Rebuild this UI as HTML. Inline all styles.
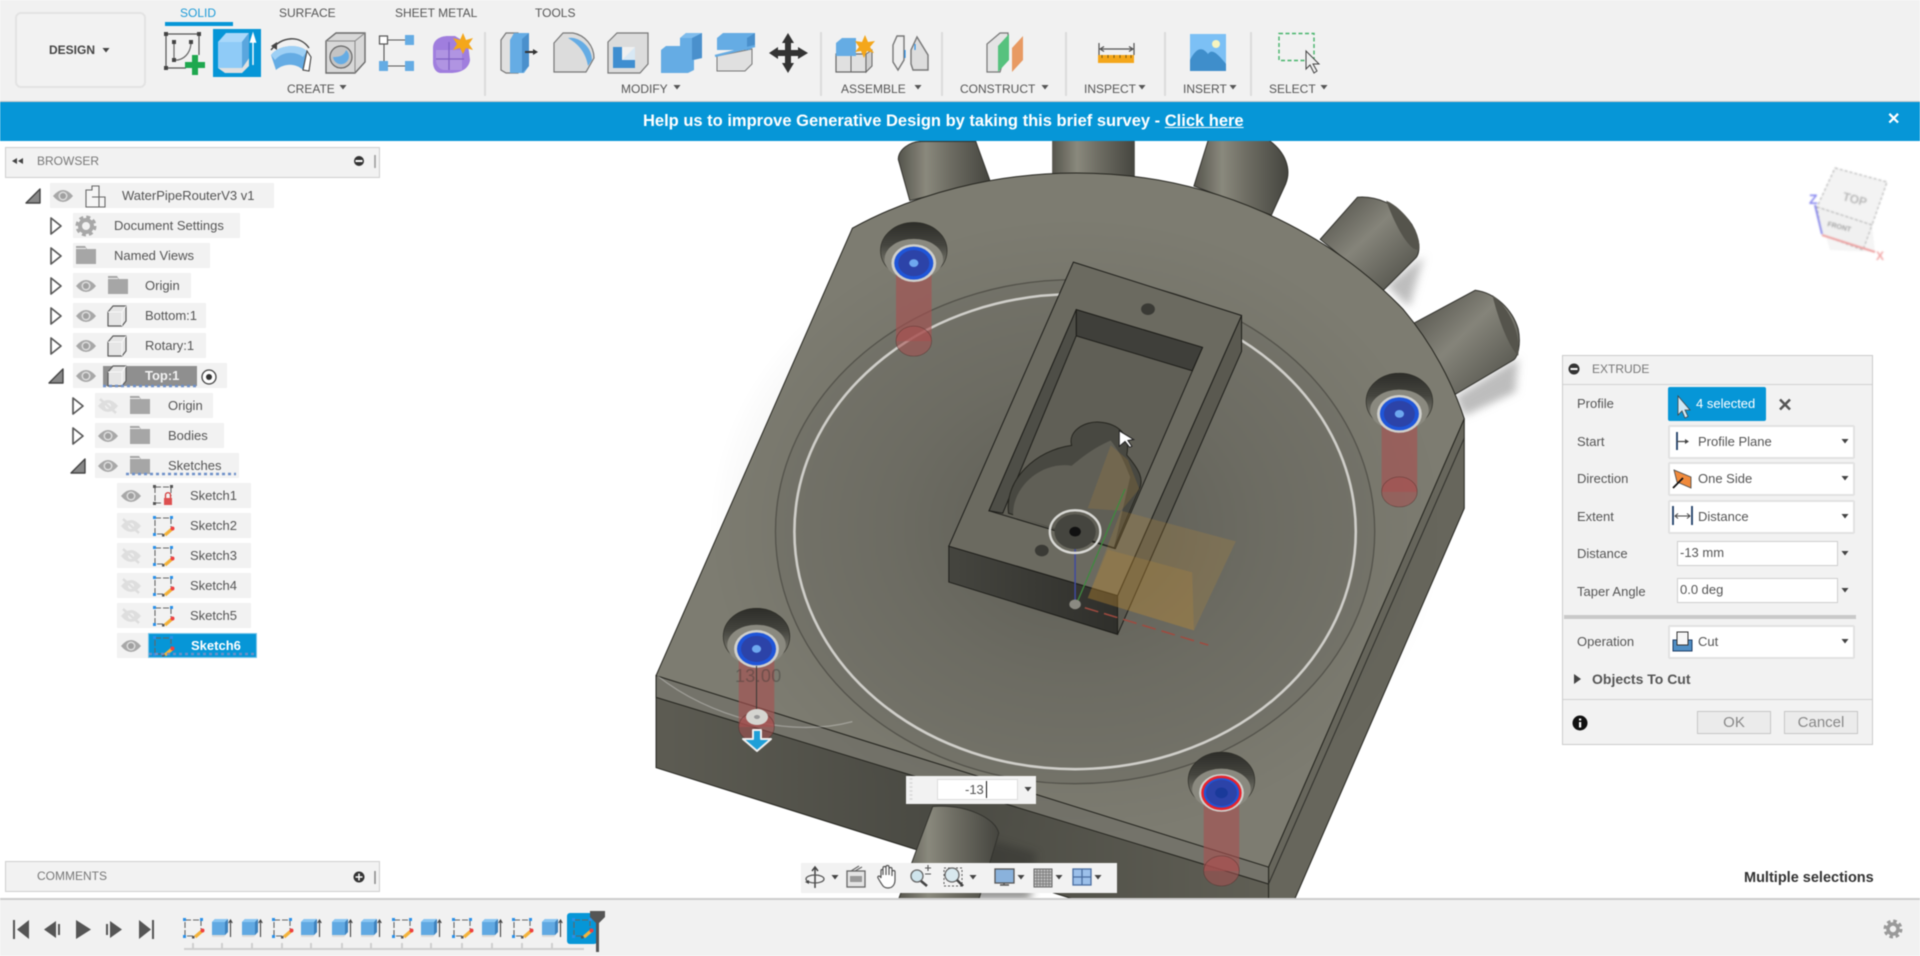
<!DOCTYPE html>
<html lang="en"><head><meta charset="utf-8"><title>Fusion 360 Extrude</title>
<style>
html,body{margin:0;padding:0;background:#fff}
#root{position:relative;width:1920px;height:956px;overflow:hidden;background:#fff;font-family:"Liberation Sans",sans-serif;color:#555;filter:blur(.42px)}
.a{position:absolute;box-sizing:border-box}
.t{position:absolute;white-space:nowrap;line-height:16px;height:16px}
.s{font-size:12px;color:#555}
.m{font-size:13px;color:#555}
.r{position:absolute;height:25px;background:#f2f2f2}
.sel{position:absolute;left:1668px;width:187px;height:34px;background:#fff;border:2px solid #e2e2e2;border-radius:2px;box-sizing:border-box}
.inp{position:absolute;left:1677px;width:161px;height:25px;background:#fff;border:1px solid #cfcfcf;box-sizing:border-box}
svg{position:absolute;left:0;top:0}
.ns *{vector-effect:non-scaling-stroke}
</style></head><body><div id="root">

<svg width="1920" height="956" viewBox="0 0 1920 956">
<defs>
<clipPath id="vp"><rect x="0" y="141" width="1920" height="757"/></clipPath>
<linearGradient id="cy" x1="0" x2="1" y1="0" y2="0"><stop offset="0" stop-color="#55544c"/><stop offset=".3" stop-color="#8a897d"/><stop offset=".55" stop-color="#6f6e64"/><stop offset="1" stop-color="#45453f"/></linearGradient>
<linearGradient id="cy2" x1="0" x2="1" y1="0" y2="1"><stop offset="0" stop-color="#4c4b44"/><stop offset=".45" stop-color="#85847a"/><stop offset="1" stop-color="#4a4a43"/></linearGradient>
<linearGradient id="cy3" x1="1" x2="0" y1="0" y2="1"><stop offset="0" stop-color="#4c4b44"/><stop offset=".5" stop-color="#8f8e82"/><stop offset="1" stop-color="#55544c"/></linearGradient>
<radialGradient id="shade" cx=".5" cy=".5" r=".5"><stop offset="0" stop-color="#3a3a34" stop-opacity=".42"/><stop offset=".5" stop-color="#3a3a34" stop-opacity=".17"/><stop offset="1" stop-color="#3a3a34" stop-opacity="0"/></radialGradient>
<linearGradient id="fr" x1="0" x2="1" y1="0" y2="0"><stop offset="0" stop-color="#5d5c53"/><stop offset=".45" stop-color="#4a4a43"/><stop offset="1" stop-color="#605f55"/></linearGradient>
<linearGradient id="bf" x1="0" x2="1" y1="0" y2="0"><stop offset="0" stop-color="#45453f"/><stop offset="1" stop-color="#2f2f2b"/></linearGradient>
<linearGradient id="cs" x1="0" x2="0" y1="0" y2="1"><stop offset="0" stop-color="#2d2d29"/><stop offset=".4" stop-color="#45453f"/><stop offset=".75" stop-color="#77766c"/></linearGradient>
<filter id="b8" x="-50%" y="-50%" width="200%" height="200%"><feGaussianBlur stdDeviation="8"/></filter>
<filter id="b1"><feGaussianBlur stdDeviation=".8"/></filter>
<g id="hole">
<circle cx="0" cy="-26" r="58" fill="url(#cs)" stroke="#25251f" stroke-width="1"/>
<ellipse cx="0" cy="-8" rx="51" ry="42" fill="#8a897f"/>
<rect x="-31" y="0" width="62" height="161" fill="#a85050" fill-opacity=".62"/>
<circle cx="0" cy="161" r="31" fill="#a85050" fill-opacity=".55" stroke="#4e2c2a" stroke-opacity=".7" stroke-width="1"/>
<circle r="39" fill="#d0d0cc"/><circle r="34" fill="#1f55d8"/><circle r="27" fill="#2c43a8"/><circle r="8" fill="#6ea8ef"/>
</g>
<g id="eye"><path d="M-10 0Q0-12 10 0Q0 12-10 0Z" fill="#a8a8a8"/><circle r="4.5" fill="#dcdcdc"/><circle r="3" fill="#a0a0a0"/></g>
<g id="eyeoff"><path d="M-10 0Q0-12 10 0Q0 12-10 0Z" fill="#dedede"/><circle r="3" fill="#f2f2f2"/><path d="M-8-7L8 7" stroke="#dedede" stroke-width="2.5"/></g>
<g id="fold"><path d="M-10-10h9l2 3h9v15h-20z" fill="#a6a6a6"/><path d="M-10-7.500h10" stroke="#eee" stroke-width="1"/></g>
<g id="cube"><path d="M-9-4L-4-10H9V5L5 10H-9Z" fill="#e6e6e6" stroke="#5a5a5a" stroke-width="1.200" stroke-linejoin="round"/><path d="M-9-4H5V10M5-4L9-10" fill="none" stroke="#f8f8f8" stroke-width="1"/></g>
<g id="tri"><path d="M-5-8L5 0L-5 8Z" fill="#fff" stroke="#5a5a5a" stroke-width="1.700" stroke-linejoin="round"/></g>
<g id="trid"><path d="M-7 7L7-7V7Z" fill="#888" stroke="#444" stroke-width="1.400" stroke-linejoin="round"/></g>
<g id="sk"><path d="M-8-8H8V1M-8-6V8H0" fill="none" stroke="#666" stroke-width="1.100" stroke-dasharray="6 2"/><g fill="#2a90e8"><rect x="-10" y="-10" width="3" height="3"/><rect x="7" y="-10" width="3" height="3"/><rect x="-10" y="7" width="3" height="3"/></g><path d="M9 3L2 9" stroke="#f3b23a" stroke-width="3.400"/><circle cx="9.500" cy="2.500" r="2" fill="#ee4040"/><rect x="-1" y="8" width="2.500" height="2.500" fill="#555"/></g>
<g id="tx"><path d="M-10-4L-7-8H3L5-10V5L2 9H-10Z" fill="#dcdcdc"/><path d="M-10-6L-7-9H6V4L3 7H-10Z" fill="#61a9e2"/><path d="M3-7L6-9V4L3 7Z" fill="#3f83be"/><path d="M-10-6L-7-9H6L3-6Z" fill="#8ac6f2"/><path d="M8.500 9V-7M6.700-5L8.500-8L10.300-5" stroke="#444" stroke-width="1.100" fill="none"/></g>
<g id="car"><path d="M-3.500-2H3.500L0 2.500Z" fill="#444"/></g>
<g id="caru"><path d="M-3.500-2H3.500L0 2.500Z" fill="#555"/></g>
</defs>

<!-- MODEL -->
<g clip-path="url(#vp)">
<g class="ns" transform="translate(640,140) scale(.574,.4847)">
<path d="M1300 300L1365 240L1340 345Z" fill="#bdbdbd" filter="url(#b8)"/>
<path d="M1420 530L1530 450L1525 520L1435 570Z" fill="#bdbdbd" filter="url(#b8)"/>
<path d="M450 40C450 20 470 3 490 3L585 3L610 85L470 125Z" fill="url(#cy)" stroke="#33332e"/>
<rect x="718" y="0" width="144" height="80" fill="url(#cy)"/>
<path d="M990 0L1095 0C1125 25 1135 60 1125 90L1100 155L965 95Z" fill="url(#cy)" stroke="#33332e"/>
<path d="M1250 118C1280 115 1320 130 1345 175C1360 205 1360 235 1350 245L1295 310L1185 205Z" fill="url(#cy2)" stroke="#33332e"/>
<path d="M1300 125C1330 140 1360 190 1358 225C1345 235 1320 190 1300 125Z" fill="#55544c"/>
<path d="M1455 310C1490 315 1520 350 1530 390C1535 420 1530 450 1520 455L1420 525L1345 380Z" fill="url(#cy2)" stroke="#33332e"/>
<path d="M1485 320C1510 340 1535 395 1530 445C1515 430 1495 370 1485 320Z" fill="#55544c"/>
<!-- sides -->
<path d="M1436 575L1436 760L1140 1568L1095 1568L1095 1500Z" fill="#67665c" stroke="#25251f"/>
<path d="M28 1105L1095 1500L1095 1568L760 1568L28 1295Z" fill="url(#fr)" stroke="#25251f"/>
<path d="M28 1105L1095 1500L1095 1535L28 1150Z" fill="#74736a" stroke="#25251f"/>
<path d="M1436 615L1095 1535" stroke="#2f2f2a" fill="none"/>
<path d="M600 1440L690 1470L680 1568L560 1568Z" fill="#33332e" opacity=".5" filter="url(#b8)"/>
<!-- bottom cylinder -->
<path d="M480 1470L510 1375C570 1370 620 1400 625 1430L590 1568L450 1568Z" fill="url(#cy)" stroke="#33332e"/>
<!-- top face -->
<path d="M370 182C480 110 620 68 760 68C1000 68 1200 190 1330 350C1380 420 1415 500 1436 575L1095 1500L28 1105Z" fill="#7d7c71" stroke="#25251f"/>
<ellipse cx="758" cy="808" rx="522" ry="520" fill="#77766c" stroke="#55544c" stroke-width="1.300"/>
<ellipse cx="760" cy="800" rx="640" ry="640" fill="url(#shade)"/>
<ellipse cx="758" cy="808" rx="489" ry="490" fill="none" stroke="#cfcec9" stroke-width="2.600"/>
<path d="M30 1105C120 1190 260 1235 370 1200" fill="none" stroke="#fff" stroke-opacity=".3" stroke-width="1.300"/>
<!-- box -->
<path d="M538 838L832 940L832 1020L538 912Z" fill="url(#bf)" stroke="#1e1e1a"/>
<path d="M1048 362L1048 436L832 1020L832 940Z" fill="#5a5950" stroke="#1e1e1a"/>
<path d="M755 252L1048 362L832 940L538 838Z" fill="#6b6a60" stroke="#1e1e1a"/>
<path d="M760 350L980 428L828 843L608 765Z" fill="#605f56" stroke="#1e1e1a"/>
<path d="M760 350L980 428L962 476L760 404Z" fill="#3f3f3a" stroke="#1e1e1a"/>
<path d="M760 350L760 404L632 770L608 765Z" fill="#4e4e47" stroke="#1e1e1a"/>
<path d="M642 770C635 700 690 640 752 630C745 600 775 580 800 582C835 585 855 610 848 650C870 680 878 700 870 720L826 842Z" fill="#484841" stroke="#25251f"/>
<path d="M650 775C648 715 700 662 752 672C770 655 790 635 820 620C840 650 845 670 854 695L826 840Z" fill="#605f56"/>
<circle cx="885" cy="349" r="12" fill="#3a3a35"/><circle cx="700" cy="847" r="12" fill="#3a3a35"/>
<!-- planes -->
<path d="M820 630L850 660L870 720L838 765L780 760Z" fill="#c89030" fill-opacity=".18"/>
<path d="M838 765L1038 828L965 1012L780 945Z" fill="#c89030" fill-opacity=".2"/>
<path d="M815 845L962 892L965 1012L780 945Z" fill="#c89030" fill-opacity=".2"/>
<!-- axes -->
<path d="M758 830V958" stroke="#3f4aa0" stroke-width="1.500"/>
<path d="M760 958L845 720" stroke="#3f8a3f" stroke-width="1.300"/>
<path d="M775 965L990 1042" stroke="#a04a3f" stroke-width="1.500" stroke-dasharray="14 6"/>
<circle cx="758" cy="958" r="10" fill="#8b8a82"/>
<circle cx="758" cy="808" r="36" fill="#45453f"/><circle cx="758" cy="808" r="10" fill="#111"/>
<circle cx="758" cy="808" r="44" fill="none" stroke="#d8d8d4" stroke-width="2.400"/>
<!-- holes -->
<use href="#hole" transform="translate(477,254)"/>
<use href="#hole" transform="translate(1323,565)"/>
<use href="#hole" transform="translate(203,1050)"/>
<use href="#hole" transform="translate(1013,1347)"/>
<circle cx="1013" cy="1347" r="33" fill="none" stroke="#e8222c" stroke-width="2.500"/>
<circle cx="1013" cy="1347" r="11" fill="#1a3a9a"/>
<path d="M203 1085V1190" stroke="#3a3a35" stroke-width="1"/>
<path d="M835 600V632L845 622L853 634L857 632L850 620L860 618Z" fill="#fff" stroke="#222" stroke-width="1"/>
</g>
<ellipse cx="757" cy="717" rx="11" ry="8" fill="#d5d5d0"/><ellipse cx="757" cy="717" rx="3" ry="2" fill="#999"/>
<path d="M753 730H761V739H771L757 751L743 739H753Z" fill="#1f9fd8" stroke="#eee" stroke-width="2" stroke-linejoin="round"/>
</g>
</svg>
<div class="t" style="left:735px;top:666px;font-size:18px;line-height:20px;height:20px;color:rgba(50,50,48,.38);letter-spacing:.3px">13.00</div>

<!-- TOOLBAR -->
<div class="a" style="left:0;top:0;width:1920px;height:102px;background:#f1f1f1;border-bottom:1px solid #c8c8c8"></div>
<div class="a" style="left:15px;top:12px;width:131px;height:76px;border:2px solid #e3e3e3;border-radius:6px;background:#f2f2f2"></div>
<div class="t" style="left:49px;top:42px;font-size:12px;font-weight:bold;color:#444">DESIGN</div>
<div class="t s" style="left:180px;top:5px;color:#1d9bd8">SOLID</div>
<div class="a" style="left:165px;top:22px;width:68px;height:4px;background:#0696d7"></div>
<div class="t s" style="left:279px;top:5px">SURFACE</div>
<div class="t s" style="left:395px;top:5px">SHEET METAL</div>
<div class="t s" style="left:535px;top:5px">TOOLS</div>
<div class="t s" style="left:287px;top:81px">CREATE</div>
<div class="t s" style="left:621px;top:81px">MODIFY</div>
<div class="t s" style="left:841px;top:81px">ASSEMBLE</div>
<div class="t s" style="left:960px;top:81px">CONSTRUCT</div>
<div class="t s" style="left:1084px;top:81px">INSPECT</div>
<div class="t s" style="left:1183px;top:81px">INSERT</div>
<div class="t s" style="left:1269px;top:81px">SELECT</div>

<!-- BANNER -->
<div class="a" style="left:0;top:102px;width:1920px;height:39px;background:#0696d7"></div>
<div class="t" style="left:643px;top:113px;font-size:16.500px;font-weight:bold;color:#fff">Help us to improve Generative Design by taking this brief survey - <span style="text-decoration:underline">Click here</span></div>
<div class="t" style="left:1887px;top:112px;font-size:16px;font-weight:bold;color:#fff">✕</div>

<!-- BROWSER -->
<div class="a" style="left:5px;top:147px;width:375px;height:31px;background:#f2f2f2;border:1px solid #cfcfcf"></div>
<div class="t s" style="left:37px;top:153px;color:#777">BROWSER</div>
<div class="r" style="left:50px;top:183px;width:224px"></div>
<div class="r" style="left:73px;top:213px;width:167px"></div>
<div class="r" style="left:73px;top:243px;width:137px"></div>
<div class="r" style="left:73px;top:273px;width:118px"></div>
<div class="r" style="left:73px;top:303px;width:133px"></div>
<div class="r" style="left:73px;top:333px;width:133px"></div>
<div class="r" style="left:73px;top:363px;width:154px"></div>
<div class="a" style="left:103px;top:366px;width:94px;height:20px;background:#8f8f8f"></div>
<div class="r" style="left:95px;top:393px;width:118px"></div>
<div class="r" style="left:95px;top:423px;width:129px"></div>
<div class="r" style="left:95px;top:453px;width:144px"></div>
<div class="r" style="left:117px;top:483px;width:134px"></div>
<div class="r" style="left:117px;top:513px;width:134px"></div>
<div class="r" style="left:117px;top:543px;width:134px"></div>
<div class="r" style="left:117px;top:573px;width:134px"></div>
<div class="r" style="left:117px;top:603px;width:134px"></div>
<div class="r" style="left:117px;top:633px;width:32px"></div>
<div class="a" style="left:148px;top:633px;width:109px;height:25px;background:#0696d7;border:1px solid #7cc6ea"></div>
<div class="t m" style="left:122px;top:188px">WaterPipeRouterV3 v1</div>
<div class="t m" style="left:114px;top:218px">Document Settings</div>
<div class="t m" style="left:114px;top:248px">Named Views</div>
<div class="t m" style="left:145px;top:278px">Origin</div>
<div class="t m" style="left:145px;top:308px">Bottom:1</div>
<div class="t m" style="left:145px;top:338px">Rotary:1</div>
<div class="t m" style="left:145px;top:368px;color:#f2f2f2;font-weight:bold">Top:1</div>
<div class="t m" style="left:168px;top:398px">Origin</div>
<div class="t m" style="left:168px;top:428px">Bodies</div>
<div class="t m" style="left:168px;top:458px">Sketches</div>
<div class="t m" style="left:190px;top:488px">Sketch1</div>
<div class="t m" style="left:190px;top:518px">Sketch2</div>
<div class="t m" style="left:190px;top:548px">Sketch3</div>
<div class="t m" style="left:190px;top:578px">Sketch4</div>
<div class="t m" style="left:190px;top:608px">Sketch5</div>
<div class="t m" style="left:191px;top:638px;color:#fff;font-weight:bold">Sketch6</div>

<!-- COMMENTS -->
<div class="a" style="left:5px;top:861px;width:375px;height:31px;background:#f2f2f2;border:1px solid #cfcfcf"></div>
<div class="t s" style="left:37px;top:868px;color:#777">COMMENTS</div>

<!-- TIMELINE -->
<div class="a" style="left:0;top:898px;width:1920px;height:58px;background:#f1f1f1;border-top:2px solid #cdcdcd"></div>
<div class="a" style="left:567px;top:913px;width:30px;height:31px;background:#0696d7;border-radius:3px"></div>

<!-- NAV -->
<div class="a" style="left:906px;top:776px;width:130px;height:28px;background:#f2f2f2"></div>
<div class="a" style="left:937px;top:779px;width:81px;height:21px;background:#fff;border:1px solid #ddd"></div>
<div class="t" style="left:965px;top:782px;font-size:13px;color:#555">-13</div>
<div class="a" style="left:986px;top:781px;width:1px;height:17px;background:#111"></div>
<div class="a" style="left:801px;top:863px;width:316px;height:30px;background:#f2f2f2"></div>
<div class="t" style="left:1744px;top:870px;font-size:14.500px;font-weight:bold;color:#333">Multiple selections</div>

<!-- EXTRUDE PANEL -->
<div class="a" style="left:1562px;top:355px;width:311px;height:390px;background:#f2f2f2;border:1px solid #cbcbcb"></div>
<div class="a" style="left:1563px;top:384px;width:309px;height:1px;background:#d2d2d2"></div>
<div class="t s" style="left:1592px;top:361px;color:#777">EXTRUDE</div>
<div class="t m" style="left:1577px;top:396px">Profile</div>
<div class="a" style="left:1668px;top:387px;width:98px;height:34px;background:#0696d7;border-radius:2px"></div>
<div class="t m" style="left:1696px;top:396px;color:#fff">4 selected</div>
<div class="t m" style="left:1577px;top:434px">Start</div>
<div class="sel" style="top:425px"></div><div class="t m" style="left:1698px;top:434px">Profile Plane</div>
<div class="t m" style="left:1577px;top:471px">Direction</div>
<div class="sel" style="top:462px"></div><div class="t m" style="left:1698px;top:471px">One Side</div>
<div class="t m" style="left:1577px;top:509px">Extent</div>
<div class="sel" style="top:500px"></div><div class="t m" style="left:1698px;top:509px">Distance</div>
<div class="t m" style="left:1577px;top:546px">Distance</div>
<div class="inp" style="top:541px"></div><div class="t m" style="left:1680px;top:545px">-13 mm</div>
<div class="t m" style="left:1577px;top:584px">Taper Angle</div>
<div class="inp" style="top:578px"></div><div class="t m" style="left:1680px;top:582px">0.0 deg</div>
<div class="a" style="left:1564px;top:615px;width:292px;height:4px;background:#c9c9c9"></div>
<div class="t m" style="left:1577px;top:634px">Operation</div>
<div class="sel" style="top:625px"></div><div class="t m" style="left:1698px;top:634px">Cut</div>
<div class="t" style="left:1592px;top:671px;font-size:14px;font-weight:bold;color:#555">Objects To Cut</div>
<div class="a" style="left:1563px;top:699px;width:309px;height:1px;background:#d2d2d2"></div>
<div class="a" style="left:1697px;top:711px;width:74px;height:23px;background:#ebebeb;border:1px solid #c6c6c6;text-align:center;font-size:15px;line-height:21px;color:#888">OK</div>
<div class="a" style="left:1784px;top:711px;width:74px;height:23px;background:#ebebeb;border:1px solid #c6c6c6;text-align:center;font-size:15px;line-height:21px;color:#888">Cancel</div>

<!-- ICON OVERLAY -->
<svg width="1920" height="956" viewBox="0 0 1920 956">
<!-- Toolbar carets -->
<use href="#car" transform="translate(106,50)"/><use href="#caru" transform="translate(343,87)"/><use href="#caru" transform="translate(677,87)"/><use href="#caru" transform="translate(918,87)"/><use href="#caru" transform="translate(1045,87)"/><use href="#caru" transform="translate(1142,87)"/><use href="#caru" transform="translate(1233,87)"/><use href="#caru" transform="translate(1324,87)"/>
<g fill="#dcdcdc"><rect x="484" y="32" width="2" height="64"/><rect x="820" y="32" width="2" height="64"/><rect x="941" y="32" width="2" height="64"/><rect x="1065" y="32" width="2" height="64"/><rect x="1164" y="32" width="2" height="64"/><rect x="1250" y="32" width="2" height="64"/></g>

<!-- sketch -->
<path d="M166 34H199V55M166 34V68H186" fill="none" stroke="#555" stroke-width="1.200"/>
<path d="M174 42V60H178C187 58 191 50 191 42" fill="none" stroke="#666" stroke-width="1.200"/>
<g fill="#444"><rect x="164" y="32" width="4" height="4"/><rect x="197" y="32" width="4" height="4"/><rect x="164" y="66" width="4" height="4"/><rect x="172" y="40" width="4" height="4"/><rect x="189" y="40" width="4" height="4"/><rect x="172" y="58" width="4" height="4"/></g>
<path d="M192 55h6v7h7v6h-7v7h-6v-7h-7v-6h7z" fill="#1fa84f"/>
<!-- extrude selected -->
<rect x="213" y="29" width="48" height="48" fill="#0696d7"/>
<path d="M218 68L225 73H242L249 66V58L242 68Z" fill="#e0e0e0"/>
<path d="M218 42H242V68H218Z" fill="#8fcbf7"/><path d="M218 42L226 33H249L242 42Z" fill="#a9d8fa"/><path d="M242 42L249 33V58L242 68Z" fill="#5aa6de"/>
<path d="M253 65V38M250.500 42L253 34L255.500 42Z" stroke="#fff" stroke-width="1.400" fill="#fff"/>
<!-- revolve -->
<path d="M271 50C282 36 300 35 309 48" fill="none" stroke="#444" stroke-width="1.400"/><path d="M271 46L277 42L277 50Z" fill="#444"/>
<path d="M271 55C278 45 298 43 307 51L303 70C296 63 284 63 276 70Z" fill="#65ace4"/><path d="M271 55C278 45 298 43 307 51L303 57C296 51 282 51 275 60Z" fill="#9ed0f5"/>
<path d="M307 51L311 57L309 71L303 70Z" fill="#fff" stroke="#444" stroke-width="1.100"/>
<!-- hole -->
<path d="M326 41L336 33H365V62L355 73H326Z" fill="#d8d8d8" stroke="#6a6a6a" stroke-width="1.400"/><path d="M326 41H355V73M355 41L365 33" fill="none" stroke="#888" stroke-width="1"/>
<circle cx="341" cy="57" r="11" fill="#c4c4c4" stroke="#666" stroke-width="1.200"/><path d="M333 57A8 8 0 1 0 346 50C344 56 339 57 333 57Z" fill="#65ace4"/>
<!-- pattern -->
<rect x="379.500" y="36" width="8" height="8" fill="#fff" stroke="#555" stroke-width="1.200"/><rect x="405" y="35" width="9" height="10" fill="#65ace4"/><rect x="379" y="61" width="9" height="10" fill="#65ace4"/><rect x="405" y="61" width="9" height="10" fill="#65ace4"/>
<path d="M388 40H405M384 44V61M388 66H405" stroke="#555" stroke-width="1.100"/>
<!-- form -->
<path d="M433 48C433 40 440 36 448 36H455L468 44L470 60C469 68 462 73 450 73H441C436 73 433 68 433 62Z" fill="#a07ede"/>
<path d="M436 50H462V70H445C440 70 436 66 436 60Z" fill="#b094e2"/><path d="M449 42V70M436 59H464" stroke="#7f60c4" stroke-width="1.200"/>
<path d="M463 33L466 40L473 38L469 44L473 50L466 48L463 54L460 48L453 50L457 44L453 38L460 40Z" fill="#f4a71b"/>
<!-- modify icons -->
<path d="M501 40L506 33H518V73H506L501 70Z" fill="#e0e0e0" stroke="#777" stroke-width="1.200"/><path d="M510 40L514 33H529V66L524 73H510Z" fill="#65ace4"/><path d="M522 39L529 33V66L522 73Z" fill="#4a90cc"/>
<path d="M525 52H534" stroke="#333" stroke-width="2"/><path d="M533 49L538 52L533 55Z" fill="#333"/>
<path d="M554 43L563 33H573C585 35 594 46 594 58L586 72H554Z" fill="#dcdcdc" stroke="#777" stroke-width="1.200"/><path d="M568 38C578 36 592 46 592 60L588 66C586 54 580 45 568 38Z" fill="#65ace4"/>
<path d="M608 42L617 33H648V64L640 73H608Z" fill="#dcdcdc" stroke="#777" stroke-width="1.200"/><rect x="613" y="47" width="22" height="21" fill="#f0f0f0"/><path d="M613 47H622V60H635V68H613Z" fill="#3f8ed0"/><path d="M622 60H635V47L622 60Z" fill="#bfe0f7" opacity=".5"/>
<path d="M661 50L666 46H680V38L686 33H702V58L694 60V70L688 73H661Z" fill="#65ace4"/><path d="M692 38L702 33V58L692 60Z" fill="#4a90cc"/><path d="M680 38L686 33H702L692 38Z" fill="#7fbcec"/>
<path d="M717 56L752 49V64L745 71H717Z" fill="#e0e0e0" stroke="#777" stroke-width="1"/><path d="M717 38L723 33H755V46L749 50H717Z" fill="#65ace4"/><path d="M747 38L755 33V46L747 50Z" fill="#4a90cc"/><path d="M715 56L755 46" stroke="#65ace4" stroke-width="2.200"/>
<path d="M788 33L794 43H791V50H798V47L808 53L798 59V56H791V63H794L788 73L782 63H785V56H778V59L769 53L778 47V50H785V43H782Z" fill="#333"/>
<!-- assemble -->
<rect x="836" y="54" width="30" height="18" fill="#e0e0e0" stroke="#666" stroke-width="1.200"/><path d="M851 54V72" stroke="#666"/><path d="M866 54L872 50V66L866 72Z" fill="#cfcfcf" stroke="#666"/>
<path d="M836 43L842 38H856V56H836Z" fill="#65ace4"/>
<path d="M865 35L868 42L875 41L870 47L874 53L867 51L864 58L861 51L855 52L859 47L855 41L862 42Z" fill="#f4a71b"/>
<path d="M893 45L897 36H904V60L898 70L893 62Z" fill="#eee" stroke="#777" stroke-width="1.400"/><path d="M911 50L917 37L928 55V70H913L911 64Z" fill="#ddd" stroke="#777" stroke-width="1.400"/><path d="M905 50V58M915 44V50" stroke="#2a90e8" stroke-width="1.200"/>
<!-- construct -->
<path d="M987 72V44L1000 33H1008V44L1000 72Z" fill="#e4e4e4" stroke="#777" stroke-width="1.200"/><path d="M998 72V46L1009 34V60Z" fill="#56c27e"/><path d="M1012 72V48L1023 36V60Z" fill="#e89a63"/>
<!-- inspect -->
<path d="M1099 43V55M1134 43V55" stroke="#555" stroke-width="1.200"/><path d="M1101 49H1132M1104 46.500L1100 49L1104 51.500M1129 46.500L1133 49L1129 51.500" fill="none" stroke="#555" stroke-width="1.200"/>
<rect x="1098" y="55" width="36" height="8" fill="#f4a71b"/><path d="M1102 55v3M1108 55v3M1114 55v3M1120 55v3M1126 55v3M1131 55v3" stroke="#7a5a10" stroke-width="1"/>
<!-- insert -->
<rect x="1190" y="34" width="36" height="37" fill="#7cc0f5"/><path d="M1190 60C1196 48 1202 46 1208 54C1212 48 1218 54 1226 64V71H1190Z" fill="#3f8ecb"/><circle cx="1216" cy="44" r="4" fill="#f6f4c0"/>
<!-- select -->
<rect x="1279" y="33.500" width="35" height="27" fill="none" stroke="#45b46a" stroke-width="1.400" stroke-dasharray="4 2.500"/>
<path d="M1306 51V69L1310 65L1314 73L1317 71L1313 64H1319Z" fill="#eee" stroke="#444" stroke-width="1"/>

<!-- Browser header icons -->
<path d="M17 158V164L12 161ZM23 158V164L18 161Z" fill="#444"/>
<circle cx="359" cy="161" r="5" fill="#333"/><rect x="355.500" y="160" width="7" height="2" fill="#fff"/><path d="M375 155V168" stroke="#999" stroke-width="1.500"/>
<!-- Tree icons -->
<use href="#trid" transform="translate(33,196)"/><use href="#eye" transform="translate(63,196)"/>
<path d="M86 190H92V186H99V197H105V207H86Z M92 197H99V207" fill="#f5f5f5" stroke="#666" stroke-width="1.100"/>
<use href="#tri" transform="translate(56,226)"/>
<circle cx="86" cy="226" r="6" fill="none" stroke="#a8a8a8" stroke-width="4"/><circle cx="86" cy="226" r="9" fill="none" stroke="#a8a8a8" stroke-width="3" stroke-dasharray="4 3.070"/>
<use href="#tri" transform="translate(56,256)"/><use href="#fold" transform="translate(86,256)"/>
<use href="#tri" transform="translate(56,286)"/><use href="#eye" transform="translate(86,286)"/><use href="#fold" transform="translate(118,286)"/>
<use href="#tri" transform="translate(56,316)"/><use href="#eye" transform="translate(86,316)"/><use href="#cube" transform="translate(117,316)"/>
<use href="#tri" transform="translate(56,346)"/><use href="#eye" transform="translate(86,346)"/><use href="#cube" transform="translate(117,346)"/>
<use href="#trid" transform="translate(56,376)"/><use href="#eye" transform="translate(86,376)"/><use href="#cube" transform="translate(117,376)"/>
<path d="M103 386H197" stroke="#6e90c8" stroke-width="2.500" stroke-dasharray="3 3"/>
<circle cx="209" cy="377" r="7" fill="#fff" stroke="#444" stroke-width="1.300"/><circle cx="209" cy="377" r="3" fill="#333"/>
<use href="#tri" transform="translate(78,406)"/><use href="#eyeoff" transform="translate(108,406)"/><use href="#fold" transform="translate(140,406)"/>
<use href="#tri" transform="translate(78,436)"/><use href="#eye" transform="translate(108,436)"/><use href="#fold" transform="translate(140,436)"/>
<use href="#trid" transform="translate(78,466)"/><use href="#eye" transform="translate(108,466)"/><use href="#fold" transform="translate(140,466)"/>
<path d="M126 474H236" stroke="#6e90c8" stroke-width="2.500" stroke-dasharray="3 3"/>
<use href="#eye" transform="translate(131,496)"/>
<path d="M155 487H171V496M155 487V503H163" fill="none" stroke="#666" stroke-width="1.100" stroke-dasharray="6 2"/><g fill="#555"><rect x="153" y="485" width="3" height="3"/><rect x="170" y="485" width="3" height="3"/><rect x="153" y="502" width="3" height="3"/></g>
<rect x="164" y="498" width="8" height="7" fill="#dd5050"/><path d="M165.500 498V495C165.500 492 170.500 492 170.500 495V498" fill="none" stroke="#d43c3c" stroke-width="1.300"/>
<use href="#eyeoff" transform="translate(131,526)"/><use href="#sk" transform="translate(163,526)"/>
<use href="#eyeoff" transform="translate(131,556)"/><use href="#sk" transform="translate(163,556)"/>
<use href="#eyeoff" transform="translate(131,586)"/><use href="#sk" transform="translate(163,586)"/>
<use href="#eyeoff" transform="translate(131,616)"/><use href="#sk" transform="translate(163,616)"/>
<use href="#eye" transform="translate(131,646)"/><use href="#sk" transform="translate(163,646)"/>
<path d="M149 654H256" stroke="#6e90c8" stroke-width="2.500" stroke-dasharray="3 3"/>
<!-- comments icons -->
<circle cx="359" cy="877" r="5.500" fill="#333"/><path d="M355.500 877H362.500M359 873.500V880.500" stroke="#fff" stroke-width="1.500"/><path d="M375 871V884" stroke="#888" stroke-width="1.500"/>

<!-- Timeline -->
<g fill="#555"><path d="M13 920H15V939H13ZM29 920V939L17 929.500Z"/><path d="M44 929.500L56 921V938ZM58 924H60V935H58Z"/><path d="M76 920L91 929.500L76 939Z"/><path d="M106 924H108V935H106ZM110 921L122 929.500L110 938Z"/><path d="M139 920L151 929.500L139 939ZM152 920H154V939H152Z"/></g>
<path d="M184 949H584M193 943V949M222 943V949M252 943V949M282 943V949M311 943V949M342 943V949M371 943V949M402 943V949M431 943V949M462 943V949M492 943V949M522 943V949M552 943V949" stroke="#cfcfcf" stroke-width="2" fill="none"/>
<use href="#sk" transform="translate(193,928)"/><use href="#tx" transform="translate(222,928)"/><use href="#tx" transform="translate(252,928)"/><use href="#sk" transform="translate(282,928)"/><use href="#tx" transform="translate(311,928)"/><use href="#tx" transform="translate(342,928)"/><use href="#tx" transform="translate(371,928)"/><use href="#sk" transform="translate(402,928)"/><use href="#tx" transform="translate(431,928)"/><use href="#sk" transform="translate(462,928)"/><use href="#tx" transform="translate(492,928)"/><use href="#sk" transform="translate(522,928)"/><use href="#tx" transform="translate(552,928)"/><use href="#sk" transform="translate(582,928)"/>
<path d="M590 911H605V917L599 923V952H596V923L590 917Z" fill="#555"/>
<circle cx="1893" cy="929" r="5" fill="none" stroke="#9a9a9a" stroke-width="3.500"/><circle cx="1893" cy="929" r="8" fill="none" stroke="#9a9a9a" stroke-width="3" stroke-dasharray="3.500 2.780"/>

<!-- Input & nav icons -->
<use href="#car" transform="translate(1028,789)"/>
<path d="M911 778V802" stroke="#ddd" stroke-width="3" stroke-dasharray="2 2"/>
<path d="M815 868V888M812 871L815 867L818 871" fill="none" stroke="#444" stroke-width="1.500"/><ellipse cx="815" cy="879" rx="9" ry="4" fill="none" stroke="#555" stroke-width="1.300"/><path d="M809 880L805 882L809 884" fill="#444"/>
<use href="#car" transform="translate(835,877)"/>
<rect x="847" y="871" width="18" height="16" fill="#e4e4e4" stroke="#666" stroke-width="1.300"/><rect x="850" y="876" width="12" height="6" fill="#999"/><path d="M851 871L859 866M855 871L862 867" stroke="#666" stroke-width="1.200"/>
<path d="M881 878V871C881 869 883 869 883 871V875V868C883 866 886 866 886 868V875V867C886 865 889 865 889 867V875V869C889 867 892 867 892 869V876V872C892 870 895 870 895 872V880C895 885 892 888 888 888C884 888 883 886 881 883L878 878C877 876 880 875 881 878Z" fill="#fff" stroke="#555" stroke-width="1.200"/>
<circle cx="917" cy="876" r="6" fill="#cfe4ec" stroke="#666" stroke-width="1.300"/><path d="M921 881L927 886" stroke="#444" stroke-width="2.500"/><path d="M925 868H931M928 865V871M925 874H931" stroke="#555" stroke-width="1.100"/>
<rect x="944" y="868" width="18" height="18" fill="none" stroke="#555" stroke-width="1" stroke-dasharray="2 2"/><circle cx="952" cy="875" r="7" fill="#d8e8ee" stroke="#666" stroke-width="1.300"/><path d="M957 880L963 886" stroke="#444" stroke-width="2.500"/>
<use href="#car" transform="translate(973,877)"/>
<rect x="995" y="869" width="19" height="14" fill="#8ab2dc" stroke="#555" stroke-width="1.300"/><path d="M1000 885H1009M1004 883V885" stroke="#555" stroke-width="1.500"/>
<use href="#car" transform="translate(1021,877)"/>
<rect x="1034" y="869" width="18" height="18" fill="#bbb" stroke="#666"/><path d="M1037 869V887M1040 869V887M1043 869V887M1046 869V887M1049 869V887M1034 872H1052M1034 875H1052M1034 878H1052M1034 881H1052M1034 884H1052" stroke="#777" stroke-width=".8"/>
<use href="#car" transform="translate(1059,877)"/>
<rect x="1073" y="869" width="18" height="16" fill="#9cc0ea" stroke="#4a6da0" stroke-width="1.300"/><path d="M1082 869V885M1073 877H1091" stroke="#4a6da0" stroke-width="1.300"/>
<use href="#car" transform="translate(1098,877)"/>

<!-- Extrude panel icons -->
<circle cx="1574" cy="369" r="5.500" fill="#333"/><rect x="1570.500" y="368" width="7" height="2" fill="#fff"/>
<path d="M1678 396V415L1682 411L1685 418L1688 416.500L1685 410H1690Z" fill="#cfe8f5" stroke="#444" stroke-width=".8"/>
<path d="M1780 399.500L1790 409.500M1790 399.500L1780 409.500" stroke="#555" stroke-width="2.500"/>
<path d="M1677 432V450" stroke="#1d3c66" stroke-width="1.800"/><path d="M1677 441.500H1686" stroke="#444" stroke-width="1.200"/><path d="M1685 439L1689 441.500L1685 444Z" fill="#444"/>
<path d="M1674 470L1691 477L1691 488L1677 482Z" fill="#f08a3c" stroke="#444" stroke-width=".8"/><path d="M1673 488L1683 478" stroke="#111" stroke-width="1.800"/>
<path d="M1673 506V525M1692 506V525" stroke="#1d3c66" stroke-width="1.800"/><path d="M1675 516H1690M1678 513.500L1675 516L1678 518.500M1687 513.500L1690 516L1687 518.500" fill="none" stroke="#444" stroke-width="1"/>
<rect x="1673" y="640" width="19" height="11" fill="#4f8ec4" stroke="#1d3c66" stroke-width="1"/><rect x="1677" y="632" width="11" height="13" fill="#f6f6f6" stroke="#333" stroke-width="1"/>
<use href="#car" transform="translate(1845,441)"/><use href="#car" transform="translate(1845,478)"/><use href="#car" transform="translate(1845,516)"/><use href="#car" transform="translate(1845,553)"/><use href="#car" transform="translate(1845,590)"/><use href="#car" transform="translate(1845,641)"/>
<path d="M1574 674L1581 679L1574 684Z" fill="#444"/>
<circle cx="1580" cy="723" r="7.500" fill="#111"/><rect x="1579" y="722" width="2.200" height="5.500" fill="#fff"/><rect x="1579" y="718.500" width="2.200" height="2" fill="#fff"/>

<!-- View cube -->
<g filter="url(#b1)">
<path d="M1830 250L1875 252L1872 225L1817 207Z" fill="#dedede" opacity=".3"/>
<path d="M1835 168L1887 182L1872 225L1817 207Z" fill="#f3f3f3" stroke="#a5a5a5" stroke-width="1" stroke-dasharray="3 2"/>
<path d="M1817 207L1872 225L1863 250L1822 235Z" fill="#f0f0f0" stroke="#aaa" stroke-width="1" stroke-dasharray="3 2"/>
<path d="M1815 205L1822 234" stroke="#8a8aec" stroke-width="2"/>
<path d="M1822 235L1875 252" stroke="#eea0a0" stroke-width="2"/>
<text x="1842" y="200" font-family="Liberation Sans, sans-serif" font-size="12" font-weight="bold" fill="#b5b5b5" transform="rotate(15 1842 200)">TOP</text>
<text x="1827" y="226" font-family="Liberation Sans, sans-serif" font-size="7" font-weight="bold" fill="#999" transform="rotate(14 1827 226)">FRONT</text>
<text x="1809" y="204" font-family="Liberation Sans, sans-serif" font-size="14" font-weight="bold" fill="#8a8af0">Z</text>
<text x="1876" y="260" font-family="Liberation Sans, sans-serif" font-size="12" font-weight="bold" fill="#f2a8a8">X</text>
</g>
</svg>
</div></body></html>
